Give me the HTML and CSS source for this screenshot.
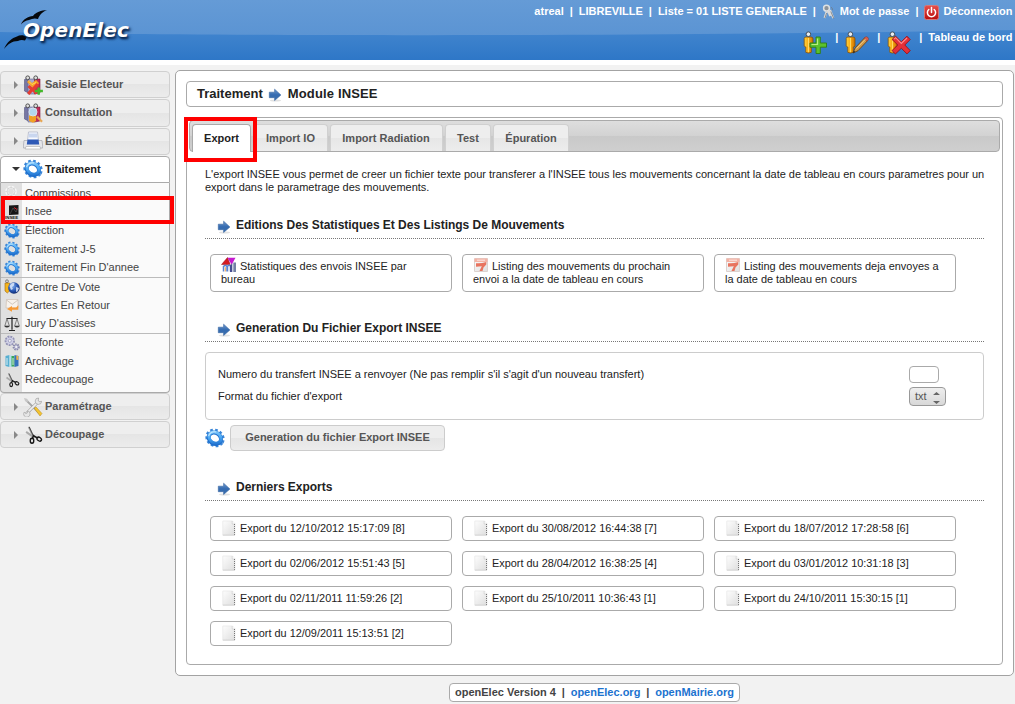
FILE: index.html
```html
<!DOCTYPE html>
<html lang="fr">
<head>
<meta charset="utf-8">
<title>openElec - Module INSEE</title>
<link rel="stylesheet" href="styles.css">
</head>
<body>
<svg class="defs" width="0" height="0">
  <defs>
    <linearGradient id="gBlue" x1="0" y1="0" x2="1" y2="1"><stop offset="0" stop-color="#8fd0fb"/><stop offset=".5" stop-color="#4ba8f3"/><stop offset="1" stop-color="#1b6bcb"/></linearGradient>
    <linearGradient id="gArrow" x1="0" y1="0" x2="0" y2="1"><stop offset="0" stop-color="#6d99cf"/><stop offset=".5" stop-color="#356bb0"/><stop offset="1" stop-color="#3b6fae"/></linearGradient>
    <linearGradient id="gMan" x1="0" y1="0" x2="1" y2="0"><stop offset="0" stop-color="#ffd23c"/><stop offset=".5" stop-color="#f9a913"/><stop offset="1" stop-color="#c96f00"/></linearGradient>
    <linearGradient id="gRed" x1="0" y1="0" x2="0" y2="1"><stop offset="0" stop-color="#e8504c"/><stop offset="1" stop-color="#b80d0d"/></linearGradient>
    <linearGradient id="gPage" x1="0" y1="0" x2="1" y2="1"><stop offset="0" stop-color="#fdfdfd"/><stop offset="1" stop-color="#dedede"/></linearGradient>
    <radialGradient id="gGlobe" cx=".4" cy=".35" r=".7"><stop offset="0" stop-color="#7eaef0"/><stop offset=".6" stop-color="#2452ae"/><stop offset="1" stop-color="#0d2361"/></radialGradient>
  </defs>
  <symbol id="gear" viewBox="0 0 20 20">
    <g transform="rotate(35 10 10)">
      <ellipse cx="10" cy="10" rx="8.7" ry="7.6" fill="none" stroke="#3a86d8" stroke-width="2.6" stroke-dasharray="2.6 2.2"/>
      <ellipse cx="10" cy="10.3" rx="6.5" ry="5.5" fill="none" stroke="#1d6dcb" stroke-width="4"/>
      <ellipse cx="9.8" cy="9.7" rx="6.4" ry="5.2" fill="none" stroke="url(#gBlue)" stroke-width="3"/>
    </g>
    <path d="M3.6 8.2C4.4 5 7.6 3.2 11 4" fill="none" stroke="#c2e7ff" stroke-width="1.1"/>
  </symbol>
  <symbol id="arrow" viewBox="0 0 14 14">
    <ellipse cx="7.5" cy="12.5" rx="5.5" ry="1.1" fill="#aaa" opacity=".35"/>
    <path d="M1.300 4.200h5.300V1.200L12.900 7l-6.300 5.500V9.700H1.300z" fill="url(#gArrow)" stroke="#38659f" stroke-width=".6"/>
  </symbol>
  <symbol id="man" viewBox="0 0 24 24">
    <path d="M2.2 7.5Q2.2 6 4 6h5q2 0 2 1.8v7.4l-1.7.8v5.3q-3 1.5-5.5 0V16l-1.6-.8z" fill="url(#gMan)" stroke="#85500b" stroke-width=".8"/>
    <circle cx="6.4" cy="3.2" r="2.3" fill="#e9edf1" stroke="#3f474e" stroke-width=".9"/>
    <path d="M6.5 7v14" stroke="#ffe679" stroke-width=".8"/>
  </symbol>
  <symbol id="man-add" viewBox="0 0 25 24">
    <use href="#man" width="24" height="24"/><path d="M14 6h4.3v6h6.2v4.2h-6.2v6.3H14v-6.3H8V12h6z" fill="#5bc12d" stroke="#2c7d14" stroke-width=".9"/><path d="M15.5 7.5v6H9.5" fill="none" stroke="#b8ef82" stroke-width="1.2"/>
  </symbol>
  <symbol id="man-edit" viewBox="0 0 25 24">
    <use href="#man" width="24" height="24"/><path d="M9 22l2.1-5.1L21 6.4l3 2.8-10 10.5z" fill="#d09a4a" stroke="#6a4416" stroke-width=".9"/><path d="M20 7.4l1.4-1.5q1.2-.7 2.4.5t.5 2.3l-1.4 1.5z" fill="#d95d4d" stroke="#83372f" stroke-width=".5"/><path d="M9 22l.9-2.2 1.3 1.3z" fill="#222"/><path d="M12.5 17.5l9-9.3" stroke="#f3cf88" stroke-width=".9"/>
  </symbol>
  <symbol id="man-del" viewBox="0 0 25 24">
    <use href="#man" width="24" height="24"/><path d="M6 8.4l3.6-3.2 5.7 5.6L21 5.2l3.2 3.4-5.4 5.4 5.4 5.6-3.2 3.3-5.7-5.6L9.4 23 6 19.6l5.8-5.6z" fill="#e43038" stroke="#9d1119" stroke-width=".9"/><path d="M8 8.2l1.6-1.5 5.7 5.8L21 7" fill="none" stroke="#ff8a8a" stroke-width="1.1"/>
  </symbol>
  <symbol id="keys" viewBox="0 0 14 16">
    <circle cx="4.5" cy="4.2" r="2.9" fill="#8d9399" stroke="#dde1e4" stroke-width="1.5"/><path d="M4.7 7.4L2.6 14M8 6l3.3 8.2M6 6.5l2.2 5.5" stroke="#dadada" stroke-width="2.1"/><path d="M3 14l1.6-5M8.8 7.5l3 7M9 3.2q2 1 1.5 3" stroke="#727a83" stroke-width=".8" fill="none"/>
  </symbol>
  <symbol id="power" viewBox="0 0 15 15">
    <rect x=".5" y=".5" width="14" height="14" rx="2" fill="url(#gRed)" stroke="#d57777"/><path d="M4.8 4.5a4.1 4.1 0 1 0 5.4 0M7.5 2.5v5" fill="none" stroke="#fff" stroke-width="1.5" stroke-linecap="round"/>
  </symbol>
  <symbol id="binders" viewBox="0 0 20 20">
    <path d="M1.5 4.5l4-1.5v15l-4-2z" fill="#7777a4" stroke="#55557d" stroke-width=".6"/><path d="M5 4h7v15H5z" fill="#a9a9d0" stroke="#66668e" stroke-width=".6"/><path d="M11.5 4h5.5v14l-5.5 1z" fill="#c12d58" stroke="#7e1a39" stroke-width=".6"/>
    <circle cx="4.7" cy="2.8" r="1.9" fill="#ddd" stroke="#444" stroke-width=".9"/><circle cx="12.7" cy="2.8" r="1.9" fill="#ddd" stroke="#444" stroke-width=".9"/>
  </symbol>
  <symbol id="saisie" viewBox="0 0 20 20">
    <use href="#binders"/><path d="M4 7l2-2 3 3 4-3 3 3-3 4-3 1z" fill="#f7a326"/><path d="M4.500 12l2-2 3 2.500 4-4.500 2.500 2-4 4.500 2.500 3-2 2-3-3-3 3.500-2.500-2 3-3.500z" fill="#e73c31"/><path d="M6 6.500l3 3 4-2" stroke="#ffd45f" fill="none"/><path d="M14.5 12.5h2.4v2.3h3v2.4h-3v2.6h-2.4v-2.6h-2.7v-2.4h2.7z" fill="#43b92b"/>
  </symbol>
  <symbol id="consult" viewBox="0 0 20 20">
    <use href="#binders"/><path d="M6 11.5h7v6.5l-3 1.7L6 18z" fill="#f1a024"/><path d="M6 5.500h7.500v7H6z" fill="#a4cbe6"/><circle cx="10" cy="9" r="4" fill="#b9dcf1" fill-opacity=".7" stroke="#d4e4ef"/><path d="M14 13.5l5 5.2" stroke="#e7a653" stroke-width="2.2"/>
  </symbol>
  <symbol id="printer" viewBox="0 0 20 20">
    <path d="M5.5 1h9l1 9H4.5z" fill="#f8faff" stroke="#a8adc2" stroke-width=".7"/><path d="M6 2.5h8l.5 4H5.5z" fill="#c9d6ef"/><path d="M1 9.5h18l.7 5.5v2H.4v-2z" fill="#e5e6ea" stroke="#a3a5ad" stroke-width=".7"/><path d="M4.5 8.5h11l.7 5H3.8z" fill="#2e59b6"/><path d="M3 15.5h14l.8 2.5H2.2z" fill="#fff" stroke="#aaa" stroke-width=".6"/>
  </symbol>
  <symbol id="tools" viewBox="0 0 20 20">
    <path d="M3 3l14 14" stroke="#a7a7a7" stroke-width="1.8"/><path d="M11 11l2-1 6 6.5-2 2.5z" fill="#f5c52f" stroke="#ae8422" stroke-width=".5"/><path d="M1 1l3 .8L5.5 4 4 5.3 2 4z" fill="#c8c8c8"/><path d="M3.3 16.7L16 4" stroke="#999" stroke-width="3"/><path d="M3.3 16.7L16 4" stroke="#eee" stroke-width="1.8"/><path d="M18.6 4.3a3.2 3.2 0 1 1-3-3.3l-.4 2.7 1 .9zM1.2 15.2a3.2 3.2 0 1 0 3.4-1.3L4.3 16l-1.5.5z" fill="#e6e6e6" stroke="#999" stroke-width=".6"/>
  </symbol>
  <symbol id="scissors" viewBox="0 0 16 16">
    <path d="M4.6 1.5L8 8.8M2.5 5.5l5.5 4 4.5.6" stroke="#aaa" stroke-width="1.6" fill="none"/><path d="M4.9 1.5L8.3 8.8" stroke="#333" stroke-width=".7"/><ellipse cx="7.2" cy="12.6" rx="1.4" ry="2" fill="none" stroke="#161616" stroke-width="1.1"/><ellipse cx="13" cy="11.3" rx="1.9" ry="1.4" transform="rotate(35 13 11.3)" fill="none" stroke="#161616" stroke-width="1.1"/><path d="M7.5 10.7l.9-2.2 2.9 1.8" stroke="#161616" stroke-width="1.1" fill="none"/>
  </symbol>
  <symbol id="faded" viewBox="0 0 16 16">
    <circle cx="7" cy="6.5" r="4.3" fill="none" stroke="#f6f6f6" stroke-width="3" stroke-dasharray="2.3 1.1"/><circle cx="7" cy="6.5" r="4" fill="none" stroke="#c9c9c9" stroke-width=".7"/><path d="M11 12l4 1.5" stroke="#bbb" stroke-width="2"/>
  </symbol>
  <symbol id="vote" viewBox="0 0 16 16">
    <circle cx="3" cy="2.2" r="1.4" fill="#ddd" stroke="#444" stroke-width=".6"/><path d="M1 4h4.5v8L3.3 14 1 12z" fill="#f6b51b" stroke="#9a6710" stroke-width=".6"/><circle cx="9.9" cy="9" r="5.8" fill="url(#gGlobe)"/><path d="M5.5 7q2-4 5-3l-.5 2.5L8 8l1 2-2 1zM12 8l3 1-1.5 3.5L12 13z" fill="#dce8fa" opacity=".85"/>
  </symbol>
  <symbol id="mail" viewBox="0 0 16 16">
    <path d="M2.5 2.5h11.5v8.5H2z" fill="#f7f2ec" stroke="#cdbfb1" stroke-width=".7"/><path d="M2.5 3l5.7 4.3L14 3" fill="none" stroke="#c5bbb0" stroke-width=".8"/><path d="M14.300 8.200v4.600H8v2L3 12l5-3.100v1.700h4.200z" fill="#f79a35"/>
  </symbol>
  <symbol id="scales" viewBox="0 0 16 16">
    <path d="M8 .8v13M2.5 2.5h11M5 14.5h6" stroke="#222" stroke-width="1.2"/><path d="M3 2.7L.8 10h4.6zM13 2.7L10.6 10h4.7z" fill="none" stroke="#555" stroke-width=".7"/><path d="M.2 10h5.6q-2.8 3-5.6 0zM10.2 10h5.6q-2.8 3-5.6 0z" fill="#333"/>
  </symbol>
  <symbol id="gears" viewBox="0 0 16 16">
    <circle cx="5.8" cy="5.8" r="4" fill="#d4d4e8" stroke="#9292b5" stroke-width="2.4" stroke-dasharray="1.8 .9"/><circle cx="5.8" cy="5.8" r="3.4" fill="#cfcfe6"/><circle cx="5.8" cy="5.8" r="1.5" fill="#f2f2f7" stroke="#8585aa" stroke-width=".6"/><circle cx="12.2" cy="12" r="2.6" fill="#c4c4de" stroke="#8989aa" stroke-width="2" stroke-dasharray="1.4 .8"/><circle cx="12.2" cy="12" r="1" fill="#f4f4f4"/>
  </symbol>
  <symbol id="archive" viewBox="0 0 16 16">
    <path d="M1.5 3l4-1v12l-4-1z" fill="#57afd1"/><path d="M5.5 2l3 .8V14h-3z" fill="#b4dfed"/><path d="M7.5 3h3v10.5h-3z" fill="#39a75c"/><path d="M10.5 2l4 1v10l-4 1z" fill="#3672bd"/><path d="M12.3 2.4l2 .6v4l-2-.3z" fill="#f3b047"/><path d="M3 5v7M9 5v7" stroke="#fff" stroke-width=".8"/>
  </symbol>
  <symbol id="stats" viewBox="0 0 16 16">
    <path d="M.5 7.500L6.500.5l2.700 7z" fill="#d51920" stroke="#910d13" stroke-width=".5"/><path d="M6.500.8h8l-3.800 7z" fill="#c51ad0"/><path d="M2.5 14.5V9.5q2-2 3.5 0v5M6.5 14.5V9.200q2-2 3 0v5.300" fill="none" stroke="#5b83cf" stroke-width="1.5"/><path d="M9 8.500l2.300-2v8.500H9z" fill="#454c91"/><path d="M12.3 5.5h2.700v9.5h-2.700z" fill="#7480a5"/><path d="M4.3 10.2v4.3" stroke="#f2a34b"/>
  </symbol>
  <symbol id="pdf" viewBox="0 0 14 14">
    <path d="M.5.5h13v13H.5z" fill="url(#gPage)" stroke="#ddd2cf"/><path d="M.5.5h13V4H.5z" fill="#f4b3a5"/><path d="M2 5.200q5 .6 10.300-1.200v2.500L9.500 9.500 8.500 13H5.500l2.300-4.700L2 8.800z" fill="#e8745f"/><path d="M3 2.2h8" stroke="#fff" stroke-width=".7"/>
  </symbol>
  <symbol id="page" viewBox="0 0 14 16">
    <path d="M.8 1h9.7L13 3.7V15H.8z" fill="url(#gPage)" stroke="#e2e2e2" stroke-width=".6"/><path d="M10.2 1v3H13" fill="#fff" stroke="#bbb" stroke-width=".5"/><path d="M12.5 4v11" stroke="#777" stroke-width="1" stroke-dasharray="1 1"/><path d="M.8 15.2H13" stroke="#c8c8c8" stroke-width=".7"/>
  </symbol>
</svg>

<header class="header">
  <svg class="header-bg" viewBox="0 0 1015 60" preserveAspectRatio="none">
    <defs>
      <linearGradient id="h1" x1="0" y1="0" x2="0" y2="1"><stop offset="0" stop-color="#659bd6"/><stop offset="1" stop-color="#548fd1"/></linearGradient>
      <linearGradient id="h2" x1="0" y1="0" x2="0" y2="1"><stop offset="0" stop-color="#4285ce"/><stop offset="1" stop-color="#2e77c7"/></linearGradient>
    </defs>
    <path d="M0 0h1015v60H0z" fill="url(#h1)"/>
    <path d="M0 32C180 36 620 37 1015 30V60H0z" fill="url(#h2)"/>
  </svg>
  <div class="logo">
    <svg class="gulls" viewBox="0 0 50 50"><path d="M4 49C7 42 12 38 17 36.500 20 34.500 24 35 27 37L25 40.500C22 39.500 20 40 18 41 12 41 8 44 4 49zM21 24.500C23 19 28 16.500 33 16 36 12 41 10.500 47 10 42 12 39.500 15 38 19 35 18 32 18.500 29 20 26 20.500 23 22 21 24.500z" fill="#05080c"/></svg>
    <span class="logo-text">OpenElec</span>
  </div>
  <nav class="actions">
    <div class="row1"><span>atreal</span><i>|</i><span>LIBREVILLE</span><i>|</i><span>Liste = 01 LISTE GENERALE</span><i>|</i><svg class="ic-keys"><use href="#keys"/></svg><span>Mot de passe</span><i>|</i><svg class="ic-power"><use href="#power"/></svg><span>Déconnexion</span></div>
    <div class="row2"><svg class="ic-man"><use href="#man-add"/></svg><i>|</i><svg class="ic-man"><use href="#man-edit"/></svg><i>|</i><svg class="ic-man"><use href="#man-del"/></svg><i>|</i><span>Tableau de bord</span></div>
  </nav>
</header>

<div class="layout">
  <aside class="menu">
    <h3 class="rub"><b class="tri"></b><svg><use href="#saisie"/></svg>Saisie Electeur</h3>
    <h3 class="rub"><b class="tri"></b><svg><use href="#consult"/></svg>Consultation</h3>
    <h3 class="rub"><b class="tri"></b><svg><use href="#printer"/></svg>Édition</h3>
    <h3 class="rub open"><b class="tri"></b><svg><use href="#gear"/></svg>Traitement</h3>
    <ul class="sub">
      <li><svg><use href="#faded"/></svg>Commissions</li>
      <li><svg class="ic-insee" viewBox="0 0 16 16"><path d="M5 1.500L14.500 1v9.500L5 11z" fill="#161616"/><path d="M6 10l3-6 3 4 2-4" stroke="#555" stroke-width=".7" fill="none"/><path d="M10 3.500l3 2" stroke="#d3202a"/><text x="1" y="14.800" class="micro">INSEE</text></svg>Insee</li>
      <li><svg><use href="#gear"/></svg>Élection</li>
      <li><svg><use href="#gear"/></svg>Traitement J-5</li>
      <li><svg><use href="#gear"/></svg>Traitement Fin D'annee</li>
      <li class="sep"><svg><use href="#vote"/></svg>Centre De Vote</li>
      <li><svg><use href="#mail"/></svg>Cartes En Retour</li>
      <li><svg><use href="#scales"/></svg>Jury D'assises</li>
      <li class="sep"><svg><use href="#gears"/></svg>Refonte</li>
      <li><svg><use href="#archive"/></svg>Archivage</li>
      <li><svg><use href="#scissors"/></svg>Redecoupage</li>
    </ul>
    <h3 class="rub"><b class="tri"></b><svg><use href="#tools"/></svg>Paramétrage</h3>
    <h3 class="rub"><b class="tri"></b><svg><use href="#scissors"/></svg>Découpage</h3>
    <div class="mark mark-menu"></div>
  </aside>

  <main class="content">
    <h2 class="title">Traitement<svg><use href="#arrow"/></svg><span>Module INSEE</span></h2>
    <section class="tabs">
      <div class="tabbar">
        <span class="tab active t1">Export</span><span class="tab t2">Import IO</span><span class="tab t3">Import Radiation</span><span class="tab t4">Test</span><span class="tab t5">Épuration</span>
      </div>
      <div class="mark mark-tab"></div>
      <div class="panel">
        <p class="intro"><span>L'export INSEE vous permet de creer un fichier texte pour transferer a l'INSEE tous les mouvements concernant la date de tableau en cours parametres pour un</span> export dans le parametrage des mouvements.</p>
        <h4 class="head"><svg><use href="#arrow"/></svg>Editions Des Statistiques Et Des Listings De Mouvements</h4>
        <div class="cards tall">
          <a class="card"><svg class="ic-stats"><use href="#stats"/></svg>Statistiques des envois INSEE par<br>bureau</a>
          <a class="card"><svg><use href="#pdf"/></svg>Listing des mouvements du prochain<br>envoi a la date de tableau en cours</a>
          <a class="card"><svg><use href="#pdf"/></svg>Listing des mouvements deja envoyes a<br>la date de tableau en cours</a>
        </div>
        <h4 class="head second"><svg><use href="#arrow"/></svg>Generation Du Fichier Export INSEE</h4>
        <div class="form">
          <div class="field"><label>Numero du transfert INSEE a renvoyer (Ne pas remplir s'il s'agit d'un nouveau transfert)</label><div class="input"></div></div>
          <div class="field"><label>Format du fichier d'export</label><div class="select">txt<svg viewBox="0 0 7 13"><path d="M3.5 0L7 3H0zM0 9h7l-3.500 3z" fill="#666"/></svg></div></div>
        </div>
        <div class="submit"><svg><use href="#gear"/></svg><div class="button">Generation du fichier Export INSEE</div></div>
        <h4 class="head third"><svg><use href="#arrow"/></svg>Derniers Exports</h4>
        <div class="cards exports">
          <a class="card"><svg><use href="#page"/></svg>Export du 12/10/2012 15:17:09 [8]</a>
          <a class="card"><svg><use href="#page"/></svg>Export du 30/08/2012 16:44:38 [7]</a>
          <a class="card"><svg><use href="#page"/></svg>Export du 18/07/2012 17:28:58 [6]</a>
          <a class="card"><svg><use href="#page"/></svg>Export du 02/06/2012 15:51:43 [5]</a>
          <a class="card"><svg><use href="#page"/></svg>Export du 28/04/2012 16:38:25 [4]</a>
          <a class="card"><svg><use href="#page"/></svg>Export du 03/01/2012 10:31:18 [3]</a>
          <a class="card"><svg><use href="#page"/></svg>Export du 02/11/2011 11:59:26 [2]</a>
          <a class="card"><svg><use href="#page"/></svg>Export du 25/10/2011 10:36:43 [1]</a>
          <a class="card"><svg><use href="#page"/></svg>Export du 24/10/2011 15:30:15 [1]</a>
          <a class="card"><svg><use href="#page"/></svg>Export du 12/09/2011 15:13:51 [2]</a>
        </div>
      </div>
    </section>
  </main>
</div>
<footer class="footer"><div class="foot"><span>openElec Version 4</span><span>|</span><a>openElec.org</a><span>|</span><a>openMairie.org</a></div></footer>
</body>
</html>
```
FILE: styles.css
```css
* { box-sizing: border-box; }
body {
  margin: 0;
  width: 1015px;
  height: 704px;
  overflow: hidden;
  background: #f2f2f2;
  color: #222;
  font: 11px/13px "Liberation Sans", Arial, sans-serif;
}
h2, h3, h4, p, ul { margin: 0; padding: 0; }
svg { flex: none; }
.defs { position: absolute; }
.micro { font: bold 4.4px "Liberation Sans", sans-serif; fill: #111; }

/* Header */
.header {
  position: relative;
  height: 65px;
  border-bottom: 5px solid #fff;
  display: flex;
  justify-content: space-between;
  color: #fff;
  font-weight: bold;
}
.header-bg { position: absolute; left: 0; top: 0; width: 1015px; height: 60px; }
.logo { position: relative; width: 150px; height: 60px; padding: 19px 0 0 23px; }
.gulls { position: absolute; left: 0; top: 0; width: 50px; height: 50px; }
.logo-text {
  position: relative;
  font: italic bold 20px/22px "DejaVu Sans", sans-serif;
  letter-spacing: 0.1px;
  text-shadow: 1px 2px 2px #0b2a54, 2px 2px 3px #123a6b;
}
.actions { position: relative; padding: 3px 2.5px 0 0; }
.actions i { font-style: normal; }
.row1, .row2 { display: flex; justify-content: flex-end; }
.row1 { height: 17px; align-items: center; }
.row1 i { width: 15px; text-align: center; }
.ic-keys { width: 14px; height: 16px; margin-right: 4px; }
.ic-power { width: 15px; height: 15px; margin: 1px 4px 0 0; }
.row2 { height: 27px; margin-top: 10px; }
.row2 i { width: 17px; text-align: center; margin-top: 1px; }
.row2 span { margin: 1px 0 0 -1px; }
.ic-man { width: 25px; height: 24px; margin: 1px 1px 0 -1px; }

/* Menu */
.layout { display: flex; height: 611px; padding-top: 5px; }
.menu { position: relative; width: 175px; padding: 1px 5px 0 0; }
.rub {
  display: flex;
  align-items: center;
  height: 27.3px;
  margin-bottom: 1px;
  padding-left: 13px;
  border: 1px solid #d0d0d0;
  border-radius: 4px;
  background: linear-gradient(#eee 0 50%, #e5e5e5 50%, #ececec);
  color: #555;
  font-size: 11px;
}
.rub svg { width: 20px; height: 20px; margin-right: 2px; }
.tri { width: 9px; height: 8px; }
.tri::before {
  content: "";
  display: block;
  width: 0;
  border-left: 4px solid #888;
  border-top: 4px solid transparent;
  border-bottom: 4px solid transparent;
}
.open { margin: 0; height: 27px; background: #fff; border-color: #aaa; color: #212121; border-radius: 4px 4px 0 0; }
.open .tri { width: 11px; height: 4px; margin-left: -2px; }
.open .tri::before { border: 4px solid transparent; border-top-color: #333; border-bottom: 0; }
.sub {
  height: 210px;
  padding-top: 1.1px;
  list-style: none;
  border: 1px solid #aaa;
  border-top: 0;
  border-radius: 0 0 4px 4px;
  background: linear-gradient(90deg, #e0e0e0 21px, #fafafa 21px);
  color: #444;
}
.sub li { display: flex; align-items: center; height: 18.65px; }
.sub svg { width: 16px; height: 16px; margin: 0 5px 0 3px; }
.sub .ic-insee { overflow: visible; }
.sub .sep { border-top: 1px solid #bbb; }
.mark { position: absolute; border: 4px solid #f00; }
.mark-menu { left: 1px; top: 126px; width: 173px; height: 28px; }
.mark-tab { left: -3px; top: -1px; width: 73px; height: 45px; }

/* Content */
.content {
  width: 839px;
  height: 606px;
  padding: 10px;
  border: 1px solid #a3a3a3;
  border-radius: 5px;
  background: #fff;
}
.title {
  display: flex;
  align-items: center;
  height: 26px;
  padding: 0 0 2px 10px;
  border: 1px solid #aaa;
  border-radius: 4px;
  font-size: 13px;
}
.title svg { width: 14px; height: 14px; margin: 3px 6px 0 5px; }
.title span { letter-spacing: 0.15px; }
.tabs { position: relative; height: 548px; margin-top: 10px; padding: 2px; border: 1px solid #aaa; border-radius: 4px; }
.tabbar {
  display: flex;
  align-items: flex-end;
  height: 32px;
  padding-left: 2px;
  border: 1px solid #aaa;
  border-radius: 4px;
  background: linear-gradient(#dedede, #d2d2d2 50%, #c9c9c9 51%, #cfcfcf);
  font-weight: bold;
}
.tab {
  height: 27px;
  margin-right: 2px;
  border: 1px solid #d0d0d0;
  border-bottom: 0;
  border-radius: 4px 4px 0 0;
  background: linear-gradient(#eee 0 50%, #e6e6e6 50%, #ededed);
  color: #555;
  line-height: 26px;
  text-align: center;
}
.tab.active { height: 28px; margin-bottom: -1px; border-color: #aaa; background: #fff; color: #212121; line-height: 27px; }
.t1 { width: 59px; }
.t2 { width: 75px; }
.t3 { width: 113px; padding-right: 1px; }
.t4 { width: 46px; }
.t5 { width: 76px; }
.panel { padding: 16px 16px 0; }
.intro span { display: block; white-space: nowrap; letter-spacing: -0.01px; }
.head {
  display: flex;
  align-items: center;
  height: 27px;
  margin-top: 18px;
  padding: 1px 0 0 12px;
  border-bottom: 1px dotted #777;
  font-size: 12px;
  letter-spacing: -0.02px;
}
.head svg { width: 14px; height: 14px; margin: 2px 5px 0 0; }
.second { margin-top: 23px; }
.third { margin-top: 23px; }
.cards { display: grid; grid-template-columns: 242px 242px 242px; gap: 10px; padding: 15px 5px 0; font-size: 10.9px; }
.card { height: 25px; padding: 4px 10px 0; border: 1px solid #aaa; border-radius: 4px; white-space: nowrap; }
.card svg { width: 14px; height: 16px; margin: -1px 5px -4px 0; vertical-align: baseline; }
.tall { font-size: 10.95px; }
.tall .card { height: 38px; padding-top: 5px; }
.tall .card svg { width: 14px; height: 14px; margin: -2px 4px -2px 1px; }
.tall .card .ic-stats { width: 16px; height: 16px; margin: -4px 3px -3px 0; }
.exports .card svg { margin-left: 1px; margin-right: 4px; }
.form { height: 68px; margin-top: 10px; padding: 13px 37px 0 12px; border: 1px solid #ccc; border-radius: 4px; }
.field { display: flex; height: 22px; align-items: flex-start; justify-content: space-between; }
.field label { padding-top: 2px; letter-spacing: -0.01px; }
.input { width: 30px; height: 17px; margin-right: 7px; border: 1px solid #aaa; border-radius: 4px; }
.select {
  display: flex;
  align-items: center;
  justify-content: space-between;
  width: 37px;
  height: 19px;
  margin-top: -1px;
  padding: 0 5px;
  border: 1px solid #999;
  border-radius: 4px;
  background: linear-gradient(#eee, #d8d8d8);
  color: #555;
}
.select svg { width: 7px; height: 13px; margin-top: 3px; }
.submit { display: flex; align-items: center; margin-top: 5px; gap: 5px; }
.submit svg { width: 20px; height: 20px; }
.button {
  width: 215px;
  height: 26px;
  border: 1px solid #ccc;
  border-radius: 4px;
  background: linear-gradient(#eee 0 50%, #e5e5e5 50%, #ececec);
  color: #555;
  font-weight: bold;
  line-height: 23px;
  text-align: center;
}

/* Footer */
.footer { display: flex; padding: 7px 0 0 449px; }
.foot {
  display: flex;
  justify-content: space-between;
  width: 291px;
  height: 19px;
  padding: 0 5px;
  border: 1px solid #aaa;
  border-radius: 4px;
  background: #fff;
  color: #444;
  font-weight: bold;
  line-height: 17px;
}
.foot a { color: #1c73cf; }
```
